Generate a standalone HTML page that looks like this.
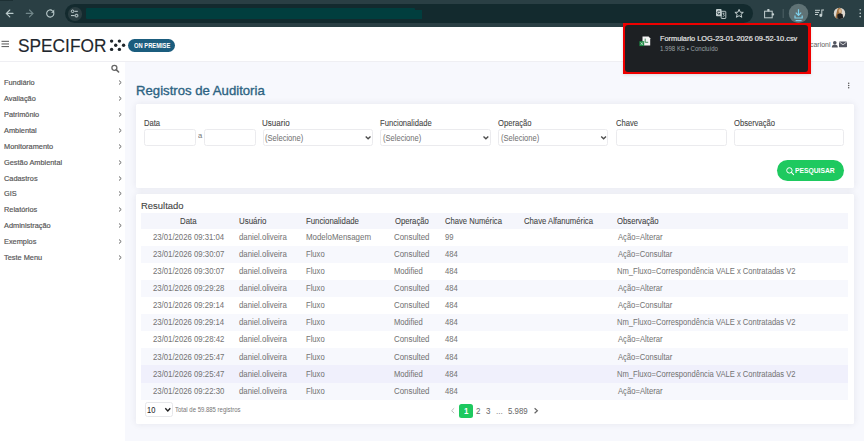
<!DOCTYPE html><html><head><meta charset="utf-8"><style>
*{box-sizing:border-box;margin:0;padding:0}
html,body{width:864px;height:441px;overflow:hidden;background:#f7f8fd;font-family:"Liberation Sans",sans-serif}
body{position:relative}
.a{position:absolute}
.t{position:absolute;white-space:nowrap;line-height:1}
svg{position:absolute;overflow:visible}
.mi{position:absolute;left:4px;font-size:7.6px;letter-spacing:-0.3px;color:#555;white-space:nowrap;line-height:1;-webkit-text-stroke:0.12px #555}
.card{position:absolute;background:#fff;border-radius:1.5px;box-shadow:0 0 7px rgba(30,30,70,.085)}
.lbl{position:absolute;font-size:8px;letter-spacing:-0.22px;color:#444;line-height:1;white-space:nowrap;-webkit-text-stroke:0.12px #444}
.inp{position:absolute;top:128.8px;height:17px;border:1px solid #ebebee;border-radius:2.5px;background:#fff}
.sel{font-size:8px;letter-spacing:-0.34px;color:#6a6a6a;-webkit-text-stroke:0.1px #6a6a6a}
.c{position:absolute;font-size:7.8px;letter-spacing:-0.15px;color:#5e5e5e;white-space:nowrap;line-height:1;-webkit-text-stroke:0.04px #5e5e5e}
.h{color:#3c3c3c;-webkit-text-stroke:0.04px #3c3c3c;letter-spacing:-0.2px}
</style></head><body>
<div class="a" style="left:0;top:0;width:864px;height:27px;background:#2a3f44"></div>
<div class="a" style="left:0;top:0;width:13px;height:1px;background:#1d3034"></div>
<div class="a" style="left:65px;top:4px;width:688px;height:19px;border-radius:10px;background:#132a2e"></div>
<div class="a" style="left:86.3px;top:8.3px;width:328.5px;height:11.2px;background:#013e3e;border-radius:1px"></div><div class="a" style="left:414px;top:10.2px;width:8px;height:9.3px;background:#013e3e"></div>
<div class="a" style="left:68px;top:7px;width:13.5px;height:13.5px;border-radius:50%;background:#2a3d41"></div>
<svg style="left:0;top:0" width="864" height="27">
<g fill="none" stroke="#b9cacb" stroke-width="1.1" stroke-linecap="round">
<path d="M13 13.4H6.5M9.8 10 6.3 13.4 9.8 16.8"/>
</g>
<g fill="none" stroke="#71878a" stroke-width="1.1" stroke-linecap="round">
<path d="M26.3 13.4H32.8M29.5 10 33 13.4 29.5 16.8"/>
</g>
<g fill="none" stroke="#b9cacb" stroke-width="1.1">
<path d="M53.6 12.2A3.6 3.6 0 1 1 52.6 10.8"/>
</g>
<path d="M54.2 9.6V12.7H51.1Z" fill="#b9cacb"/>
<g fill="none" stroke="#c6d3d4" stroke-width="1">
<circle cx="72.6" cy="11.3" r="1.3"/>
<path d="M74.5 11.3H77.8M71 15.6H74.6"/>
<rect x="75.2" y="14.3" width="2.6" height="2.6" rx=".6"/>
</g>
<!-- translate -->
<rect x="716" y="9" width="5.6" height="7.2" rx=".9" fill="#c3cfd0"/>
<path d="M720.1 11.6A1.6 1.6 0 1 0 720.1 13.6H718.9" fill="none" stroke="#132a2e" stroke-width=".8"/>
<rect x="721.2" y="11.3" width="4.6" height="7.2" rx=".6" fill="none" stroke="#c3cfd0" stroke-width=".9"/>
<path d="M722.4 13.2H724.6M723.5 13.2V15.2M722.6 16.8C723.8 16.6 724.4 15.8 724.5 14.8" fill="none" stroke="#c3cfd0" stroke-width=".7"/>
<!-- star -->
<path d="M739.1 9.4 740.3 12.2 743.3 12.4 741 14.3 741.8 17.3 739.1 15.7 736.4 17.3 737.2 14.3 734.9 12.4 737.9 12.2Z" fill="none" stroke="#c3cfd0" stroke-width="1" stroke-linejoin="round"/>
<!-- puzzle -->
<rect x="764.6" y="11.2" width="7.6" height="6.6" fill="none" stroke="#c3cfd0" stroke-width="1"/>
<rect x="767.2" y="9" width="2.4" height="2.4" rx=".8" fill="#c3cfd0"/>
<rect x="771.8" y="13.2" width="2.3" height="2.4" rx=".8" fill="#c3cfd0"/>
<path d="M783.2 9V18" stroke="#4d6165" stroke-width="1"/>
<circle cx="798.5" cy="13.4" r="9.7" fill="#5f7275"/>
<g fill="none" stroke="#7fd3ee" stroke-width="1.2">
<path d="M798.5 9.2V15.2M795.8 12.6 798.5 15.3 801.2 12.6"/>
<path d="M795 15.6V18H802.2V15.6"/>
<path d="M795.6 20.6H801.6"/>
</g>
<g fill="#c3cfd0">
<rect x="815" y="9.8" width="5" height="1"/>
<rect x="815" y="11.9" width="4" height="1"/>
<rect x="815" y="14" width="3" height="1"/>
<path d="M821.3 9.5H824V10.6H822.3V15.3A1.5 1.5 0 1 1 821.3 14Z"/>
</g>
<defs><clipPath id="av"><circle cx="839.5" cy="13.4" r="5.7"/></clipPath></defs>
<circle cx="839.5" cy="13.4" r="5.7" fill="#dcd7cf"/>
<g clip-path="url(#av)">
<path d="M838.2 8.2C840.6 7.6 841.8 9 841.6 11.6L841.2 14.2 838.6 15 836.4 19.5 834.6 18.6C836.6 16 836.4 10 838.2 8.2Z" fill="#a0703f"/>
<ellipse cx="840" cy="11" rx="1.4" ry="1.9" fill="#d9b58f"/>
<path d="M837.4 14.6C838.6 13.4 841 13.2 842.6 14.2L843.4 19.6H837.2Z" fill="#1e1e1e"/>
</g>
<g fill="#c3cfd0"><circle cx="860.2" cy="9.8" r=".8"/><circle cx="860.2" cy="13.3" r=".8"/><circle cx="860.2" cy="16.6" r=".8"/></g>
</svg>
<div class="a" style="left:0;top:27px;width:864px;height:35px;background:#fff;border-bottom:1px solid #efeff3"></div>
<svg style="left:0;top:27px" width="20" height="30"><g fill="#666"><rect x="1.5" y="13.8" width="7.5" height="1.1"/><rect x="1.5" y="16.4" width="7.5" height="1.1"/><rect x="1.5" y="19" width="7.5" height="1.1"/></g></svg>
<div class="t" style="left:17.87px;top:38px;font-size:17.7px;color:#1f272d;-webkit-text-stroke:0.15px #1f272d;transform:scaleX(0.9775);transform-origin:0 0">SPECIFOR</div>
<svg style="left:0;top:0" width="130" height="60"><g fill="#1f262b"><circle cx="111.6" cy="41.1" r="1.7"/><circle cx="119.4" cy="41.1" r="1.7"/><circle cx="115.7" cy="45.3" r="1.7"/><circle cx="123.6" cy="45.3" r="1.7"/><circle cx="111.6" cy="49.4" r="1.7"/><circle cx="119.4" cy="49.4" r="1.7"/></g></svg>
<div class="a" style="left:128px;top:38.8px;width:47px;height:13.5px;border-radius:7px;background:#1b5d7e"></div>
<div class="t" style="left:133.58px;top:43px;font-size:6.5px;color:#fff;font-weight:700;transform:scaleX(0.8889);transform-origin:0 0">ON PREMISE</div>
<div class="t" style="left:809.98px;top:41px;font-size:7.8px;color:#666;-webkit-text-stroke:0.05px #666;transform:scaleX(0.8899);transform-origin:0 0">carioni</div>
<svg style="left:0;top:0" width="864" height="60"><g fill="#525560"><circle cx="834.8" cy="42.8" r="1.8"/><path d="M831.8 47.6C831.8 45.4 833 44.6 834.8 44.6S837.8 45.4 837.8 47.6Z"/><rect x="839" y="41.6" width="8" height="5.6" rx=".6"/></g><path d="M839.3 42 843 44.8 846.7 42" fill="none" stroke="#fff" stroke-width=".7"/></svg>
<div class="a" style="left:0;top:62px;width:125px;height:379px;background:#fff"></div>
<svg style="left:0;top:0" width="130" height="80"><circle cx="114.4" cy="67.8" r="2.5" fill="none" stroke="#666" stroke-width="1.3"/><path d="M116.2 69.6 118.6 72" stroke="#666" stroke-width="1.6" stroke-linecap="round"/></svg>
<div class="t" style="left:3.72px;top:79px;font-size:7.6px;color:#555;-webkit-text-stroke:0.18px #555;transform:scaleX(0.9700);transform-origin:0 0">Fundiário</div>
<div class="t" style="left:4.20px;top:95px;font-size:7.6px;color:#555;-webkit-text-stroke:0.18px #555;transform:scaleX(0.9700);transform-origin:0 0">Avaliação</div>
<div class="t" style="left:3.72px;top:111px;font-size:7.6px;color:#555;-webkit-text-stroke:0.18px #555;transform:scaleX(0.9700);transform-origin:0 0">Patrimônio</div>
<div class="t" style="left:4.20px;top:127px;font-size:7.6px;color:#555;-webkit-text-stroke:0.18px #555;transform:scaleX(0.9700);transform-origin:0 0">Ambiental</div>
<div class="t" style="left:3.72px;top:143px;font-size:7.6px;color:#555;-webkit-text-stroke:0.18px #555;transform:scaleX(0.9700);transform-origin:0 0">Monitoramento</div>
<div class="t" style="left:3.96px;top:159px;font-size:7.6px;color:#555;-webkit-text-stroke:0.18px #555;transform:scaleX(0.9700);transform-origin:0 0">Gestão Ambiental</div>
<div class="t" style="left:3.96px;top:175px;font-size:7.6px;color:#555;-webkit-text-stroke:0.18px #555;transform:scaleX(0.9700);transform-origin:0 0">Cadastros</div>
<div class="t" style="left:3.96px;top:190px;font-size:7.6px;color:#555;-webkit-text-stroke:0.18px #555;transform:scaleX(0.9700);transform-origin:0 0">GIS</div>
<div class="t" style="left:3.72px;top:206px;font-size:7.6px;color:#555;-webkit-text-stroke:0.18px #555;transform:scaleX(0.9700);transform-origin:0 0">Relatórios</div>
<div class="t" style="left:4.20px;top:222px;font-size:7.6px;color:#555;-webkit-text-stroke:0.18px #555;transform:scaleX(0.9700);transform-origin:0 0">Administração</div>
<div class="t" style="left:3.72px;top:238px;font-size:7.6px;color:#555;-webkit-text-stroke:0.18px #555;transform:scaleX(0.9700);transform-origin:0 0">Exemplos</div>
<div class="t" style="left:4.20px;top:254px;font-size:7.6px;color:#555;-webkit-text-stroke:0.18px #555;transform:scaleX(0.9700);transform-origin:0 0">Teste Menu</div>
<svg style="left:0;top:0" width="130" height="441"><g fill="none" stroke="#666" stroke-width="1"><path d="M119 80.50 121.2 82.50 119 84.50"/><path d="M119 96.50 121.2 98.50 119 100.50"/><path d="M119 112.50 121.2 114.50 119 116.50"/><path d="M119 128.50 121.2 130.50 119 132.50"/><path d="M119 144.50 121.2 146.50 119 148.50"/><path d="M119 160.50 121.2 162.50 119 164.50"/><path d="M119 176.50 121.2 178.50 119 180.50"/><path d="M119 191.50 121.2 193.50 119 195.50"/><path d="M119 207.50 121.2 209.50 119 211.50"/><path d="M119 223.50 121.2 225.50 119 227.50"/><path d="M119 239.50 121.2 241.50 119 243.50"/><path d="M119 255.50 121.2 257.50 119 259.50"/></g></svg>
<div class="t" style="left:136.23px;top:84px;font-size:13.6px;color:#2c6382;-webkit-text-stroke:0.35px #2c6382;transform:scaleX(0.9679);transform-origin:0 0">Registros de Auditoria</div>
<svg style="left:0;top:0" width="864" height="100"><g fill="#555"><circle cx="848.7" cy="83.3" r=".75"/><circle cx="848.7" cy="85.5" r=".75"/><circle cx="848.7" cy="87.7" r=".75"/></g></svg>
<div class="card" style="left:135.5px;top:103.5px;width:718.5px;height:84px"></div>
<div class="t" style="left:144.24px;top:119px;font-size:8.4px;color:#444;-webkit-text-stroke:0.08px #444;transform:scaleX(0.9101);transform-origin:0 0">Data</div>
<div class="t" style="left:262.02px;top:119px;font-size:8.4px;color:#444;-webkit-text-stroke:0.08px #444;transform:scaleX(0.9571);transform-origin:0 0">Usuario</div>
<div class="t" style="left:379.85px;top:119px;font-size:8.4px;color:#444;-webkit-text-stroke:0.08px #444;transform:scaleX(0.9100);transform-origin:0 0">Funcionalidade</div>
<div class="t" style="left:497.77px;top:119px;font-size:8.4px;color:#444;-webkit-text-stroke:0.08px #444;transform:scaleX(0.9100);transform-origin:0 0">Operação</div>
<div class="t" style="left:615.77px;top:119px;font-size:8.4px;color:#444;-webkit-text-stroke:0.08px #444;transform:scaleX(0.9100);transform-origin:0 0">Chave</div>
<div class="t" style="left:733.57px;top:119px;font-size:8.4px;color:#444;-webkit-text-stroke:0.08px #444;transform:scaleX(0.9100);transform-origin:0 0">Observação</div>
<div class="inp" style="left:144.3px;width:52px"></div>
<div class="t" style="left:197.76px;top:132px;font-size:8px;color:#777;transform:scaleX(0.9500);transform-origin:0 0">a</div>
<div class="inp" style="left:204px;width:51.6px"></div>
<div class="inp" style="left:262.5px;width:110.3px"></div>
<div class="t" style="left:265.14px;top:135px;font-size:8.2px;color:#747474;-webkit-text-stroke:0.04px #747474;transform:scaleX(0.9235);transform-origin:0 0">(Selecione)</div>
<div class="inp" style="left:380.3px;width:110.3px"></div>
<div class="t" style="left:382.94px;top:135px;font-size:8.2px;color:#747474;-webkit-text-stroke:0.04px #747474;transform:scaleX(0.9235);transform-origin:0 0">(Selecione)</div>
<div class="inp" style="left:498.0px;width:110.3px"></div>
<div class="t" style="left:500.64px;top:135px;font-size:8.2px;color:#747474;-webkit-text-stroke:0.04px #747474;transform:scaleX(0.9235);transform-origin:0 0">(Selecione)</div>
<svg style="left:0;top:0" width="864" height="200"><g fill="none" stroke="#4c4c4c" stroke-width="1.35"><path d="M365.70 136.5 368.10 138.8 370.50 136.5"/><path d="M483.50 136.5 485.90 138.8 488.30 136.5"/><path d="M601.20 136.5 603.60 138.8 606.00 136.5"/></g></svg>
<div class="inp" style="left:615.9px;width:110.9px"></div>
<div class="inp" style="left:733.5px;width:110.9px"></div>
<div class="a" style="left:776.7px;top:159.6px;width:67.8px;height:21px;border-radius:10.5px;background:#1ec95f"></div>
<svg style="left:0;top:0" width="864" height="200"><circle cx="789.4" cy="170.4" r="2.7" fill="none" stroke="#fff" stroke-width="1"/><path d="M791.4 172.4 793.6 174.6" stroke="#fff" stroke-width="1.1" stroke-linecap="round"/></svg>
<div class="t" style="left:795.42px;top:167px;font-size:7px;color:#fff;font-weight:700;transform:scaleX(0.9630);transform-origin:0 0">PESQUISAR</div>
<div class="card" style="left:135.5px;top:193.8px;width:718.5px;height:230.5px"></div>
<div class="t" style="left:140.76px;top:201px;font-size:9.6px;color:#444;-webkit-text-stroke:0.1px #444;transform:scaleX(0.9846);transform-origin:0 0">Resultado</div>
<div class="a" style="left:141px;top:213.2px;width:707px;height:15.6px;background:#f5f6fc"></div>
<div class="t" style="left:180.43px;top:217px;font-size:8.4px;color:#444;-webkit-text-stroke:0.08px #444;transform:scaleX(0.9333);transform-origin:0 0">Data</div>
<div class="t" style="left:239.23px;top:217px;font-size:8.4px;color:#444;-webkit-text-stroke:0.08px #444;transform:scaleX(0.9464);transform-origin:0 0">Usuário</div>
<div class="t" style="left:306.43px;top:217px;font-size:8.4px;color:#444;-webkit-text-stroke:0.08px #444;transform:scaleX(0.9321);transform-origin:0 0">Funcionalidade</div>
<div class="t" style="left:394.57px;top:217px;font-size:8.4px;color:#444;-webkit-text-stroke:0.08px #444;transform:scaleX(0.9186);transform-origin:0 0">Operação</div>
<div class="t" style="left:444.87px;top:217px;font-size:8.4px;color:#444;-webkit-text-stroke:0.08px #444;transform:scaleX(0.9124);transform-origin:0 0">Chave Numérica</div>
<div class="t" style="left:523.77px;top:217px;font-size:8.4px;color:#444;-webkit-text-stroke:0.08px #444;transform:scaleX(0.9204);transform-origin:0 0">Chave Alfanumérica</div>
<div class="t" style="left:617.47px;top:217px;font-size:8.4px;color:#444;-webkit-text-stroke:0.08px #444;transform:scaleX(0.9229);transform-origin:0 0">Observação</div>
<div class="t" style="left:153.34px;top:233px;font-size:8.4px;color:#747474;-webkit-text-stroke:0.03px #747474;transform:scaleX(0.9246);transform-origin:0 0">23/01/2026 09:31:04</div>
<div class="t" style="left:239.47px;top:233px;font-size:8.4px;color:#747474;-webkit-text-stroke:0.03px #747474;transform:scaleX(0.9333);transform-origin:0 0">daniel.oliveira</div>
<div class="t" style="left:306.19px;top:233px;font-size:8.4px;color:#747474;-webkit-text-stroke:0.03px #747474;transform:scaleX(0.9432);transform-origin:0 0">ModeloMensagem</div>
<div class="t" style="left:394.33px;top:233px;font-size:8.4px;color:#747474;-webkit-text-stroke:0.03px #747474;transform:scaleX(0.9415);transform-origin:0 0">Consulted</div>
<div class="t" style="left:444.87px;top:233px;font-size:8.4px;color:#747474;-webkit-text-stroke:0.03px #747474;transform:scaleX(0.9100);transform-origin:0 0">99</div>
<div class="t" style="left:617.70px;top:233px;font-size:8.4px;color:#747474;-webkit-text-stroke:0.03px #747474;transform:scaleX(0.9155);transform-origin:0 0">Ação=Alterar</div>
<div class="a" style="left:141px;top:245.88px;width:707px;height:17.08px;background:#f7f8fd"></div>
<div class="t" style="left:153.34px;top:250px;font-size:8.4px;color:#747474;-webkit-text-stroke:0.03px #747474;transform:scaleX(0.9276);transform-origin:0 0">23/01/2026 09:30:07</div>
<div class="t" style="left:239.47px;top:250px;font-size:8.4px;color:#747474;-webkit-text-stroke:0.03px #747474;transform:scaleX(0.9333);transform-origin:0 0">daniel.oliveira</div>
<div class="t" style="left:306.22px;top:250px;font-size:8.4px;color:#747474;-webkit-text-stroke:0.03px #747474;transform:scaleX(0.9100);transform-origin:0 0">Fluxo</div>
<div class="t" style="left:394.33px;top:250px;font-size:8.4px;color:#747474;-webkit-text-stroke:0.03px #747474;transform:scaleX(0.9415);transform-origin:0 0">Consulted</div>
<div class="t" style="left:444.87px;top:250px;font-size:8.4px;color:#747474;-webkit-text-stroke:0.03px #747474;transform:scaleX(0.9100);transform-origin:0 0">484</div>
<div class="t" style="left:617.70px;top:250px;font-size:8.4px;color:#747474;-webkit-text-stroke:0.03px #747474;transform:scaleX(0.9071);transform-origin:0 0">Ação=Consultar</div>
<div class="t" style="left:153.34px;top:267px;font-size:8.4px;color:#747474;-webkit-text-stroke:0.03px #747474;transform:scaleX(0.9276);transform-origin:0 0">23/01/2026 09:30:07</div>
<div class="t" style="left:239.47px;top:267px;font-size:8.4px;color:#747474;-webkit-text-stroke:0.03px #747474;transform:scaleX(0.9333);transform-origin:0 0">daniel.oliveira</div>
<div class="t" style="left:306.22px;top:267px;font-size:8.4px;color:#747474;-webkit-text-stroke:0.03px #747474;transform:scaleX(0.9100);transform-origin:0 0">Fluxo</div>
<div class="t" style="left:394.12px;top:267px;font-size:8.4px;color:#747474;-webkit-text-stroke:0.03px #747474;transform:scaleX(0.9100);transform-origin:0 0">Modified</div>
<div class="t" style="left:444.87px;top:267px;font-size:8.4px;color:#747474;-webkit-text-stroke:0.03px #747474;transform:scaleX(0.9100);transform-origin:0 0">484</div>
<div class="t" style="left:617.02px;top:267px;font-size:8.4px;color:#747474;-webkit-text-stroke:0.03px #747474;transform:scaleX(0.9063);transform-origin:0 0">Nm_Fluxo=Correspondência VALE x Contratadas V2</div>
<div class="a" style="left:141px;top:280.04px;width:707px;height:17.08px;background:#f7f8fd"></div>
<div class="t" style="left:153.34px;top:284px;font-size:8.4px;color:#747474;-webkit-text-stroke:0.03px #747474;transform:scaleX(0.9276);transform-origin:0 0">23/01/2026 09:29:28</div>
<div class="t" style="left:239.47px;top:284px;font-size:8.4px;color:#747474;-webkit-text-stroke:0.03px #747474;transform:scaleX(0.9333);transform-origin:0 0">daniel.oliveira</div>
<div class="t" style="left:306.22px;top:284px;font-size:8.4px;color:#747474;-webkit-text-stroke:0.03px #747474;transform:scaleX(0.9100);transform-origin:0 0">Fluxo</div>
<div class="t" style="left:394.33px;top:284px;font-size:8.4px;color:#747474;-webkit-text-stroke:0.03px #747474;transform:scaleX(0.9415);transform-origin:0 0">Consulted</div>
<div class="t" style="left:444.87px;top:284px;font-size:8.4px;color:#747474;-webkit-text-stroke:0.03px #747474;transform:scaleX(0.9100);transform-origin:0 0">484</div>
<div class="t" style="left:617.70px;top:284px;font-size:8.4px;color:#747474;-webkit-text-stroke:0.03px #747474;transform:scaleX(0.9155);transform-origin:0 0">Ação=Alterar</div>
<div class="t" style="left:153.34px;top:301px;font-size:8.4px;color:#747474;-webkit-text-stroke:0.03px #747474;transform:scaleX(0.9246);transform-origin:0 0">23/01/2026 09:29:14</div>
<div class="t" style="left:239.47px;top:301px;font-size:8.4px;color:#747474;-webkit-text-stroke:0.03px #747474;transform:scaleX(0.9333);transform-origin:0 0">daniel.oliveira</div>
<div class="t" style="left:306.22px;top:301px;font-size:8.4px;color:#747474;-webkit-text-stroke:0.03px #747474;transform:scaleX(0.9100);transform-origin:0 0">Fluxo</div>
<div class="t" style="left:394.33px;top:301px;font-size:8.4px;color:#747474;-webkit-text-stroke:0.03px #747474;transform:scaleX(0.9415);transform-origin:0 0">Consulted</div>
<div class="t" style="left:444.87px;top:301px;font-size:8.4px;color:#747474;-webkit-text-stroke:0.03px #747474;transform:scaleX(0.9100);transform-origin:0 0">484</div>
<div class="t" style="left:617.70px;top:301px;font-size:8.4px;color:#747474;-webkit-text-stroke:0.03px #747474;transform:scaleX(0.9071);transform-origin:0 0">Ação=Consultar</div>
<div class="a" style="left:141px;top:314.20px;width:707px;height:17.08px;background:#f7f8fd"></div>
<div class="t" style="left:153.34px;top:318px;font-size:8.4px;color:#747474;-webkit-text-stroke:0.03px #747474;transform:scaleX(0.9246);transform-origin:0 0">23/01/2026 09:29:14</div>
<div class="t" style="left:239.47px;top:318px;font-size:8.4px;color:#747474;-webkit-text-stroke:0.03px #747474;transform:scaleX(0.9333);transform-origin:0 0">daniel.oliveira</div>
<div class="t" style="left:306.22px;top:318px;font-size:8.4px;color:#747474;-webkit-text-stroke:0.03px #747474;transform:scaleX(0.9100);transform-origin:0 0">Fluxo</div>
<div class="t" style="left:394.12px;top:318px;font-size:8.4px;color:#747474;-webkit-text-stroke:0.03px #747474;transform:scaleX(0.9100);transform-origin:0 0">Modified</div>
<div class="t" style="left:444.87px;top:318px;font-size:8.4px;color:#747474;-webkit-text-stroke:0.03px #747474;transform:scaleX(0.9100);transform-origin:0 0">484</div>
<div class="t" style="left:617.02px;top:318px;font-size:8.4px;color:#747474;-webkit-text-stroke:0.03px #747474;transform:scaleX(0.9063);transform-origin:0 0">Nm_Fluxo=Correspondência VALE x Contratadas V2</div>
<div class="t" style="left:153.34px;top:335px;font-size:8.4px;color:#747474;-webkit-text-stroke:0.03px #747474;transform:scaleX(0.9276);transform-origin:0 0">23/01/2026 09:28:42</div>
<div class="t" style="left:239.47px;top:335px;font-size:8.4px;color:#747474;-webkit-text-stroke:0.03px #747474;transform:scaleX(0.9333);transform-origin:0 0">daniel.oliveira</div>
<div class="t" style="left:306.22px;top:335px;font-size:8.4px;color:#747474;-webkit-text-stroke:0.03px #747474;transform:scaleX(0.9100);transform-origin:0 0">Fluxo</div>
<div class="t" style="left:394.33px;top:335px;font-size:8.4px;color:#747474;-webkit-text-stroke:0.03px #747474;transform:scaleX(0.9415);transform-origin:0 0">Consulted</div>
<div class="t" style="left:444.87px;top:335px;font-size:8.4px;color:#747474;-webkit-text-stroke:0.03px #747474;transform:scaleX(0.9100);transform-origin:0 0">484</div>
<div class="t" style="left:617.70px;top:335px;font-size:8.4px;color:#747474;-webkit-text-stroke:0.03px #747474;transform:scaleX(0.9155);transform-origin:0 0">Ação=Alterar</div>
<div class="a" style="left:141px;top:348.36px;width:707px;height:17.08px;background:#f7f8fd"></div>
<div class="t" style="left:153.34px;top:353px;font-size:8.4px;color:#747474;-webkit-text-stroke:0.03px #747474;transform:scaleX(0.9276);transform-origin:0 0">23/01/2026 09:25:47</div>
<div class="t" style="left:239.47px;top:353px;font-size:8.4px;color:#747474;-webkit-text-stroke:0.03px #747474;transform:scaleX(0.9333);transform-origin:0 0">daniel.oliveira</div>
<div class="t" style="left:306.22px;top:353px;font-size:8.4px;color:#747474;-webkit-text-stroke:0.03px #747474;transform:scaleX(0.9100);transform-origin:0 0">Fluxo</div>
<div class="t" style="left:394.33px;top:353px;font-size:8.4px;color:#747474;-webkit-text-stroke:0.03px #747474;transform:scaleX(0.9415);transform-origin:0 0">Consulted</div>
<div class="t" style="left:444.87px;top:353px;font-size:8.4px;color:#747474;-webkit-text-stroke:0.03px #747474;transform:scaleX(0.9100);transform-origin:0 0">484</div>
<div class="t" style="left:617.70px;top:353px;font-size:8.4px;color:#747474;-webkit-text-stroke:0.03px #747474;transform:scaleX(0.9071);transform-origin:0 0">Ação=Consultar</div>
<div class="a" style="left:141px;top:365.44px;width:707px;height:17.08px;background:#f0f0fc"></div>
<div class="t" style="left:153.34px;top:370px;font-size:8.4px;color:#747474;-webkit-text-stroke:0.03px #747474;transform:scaleX(0.9276);transform-origin:0 0">23/01/2026 09:25:47</div>
<div class="t" style="left:239.47px;top:370px;font-size:8.4px;color:#747474;-webkit-text-stroke:0.03px #747474;transform:scaleX(0.9333);transform-origin:0 0">daniel.oliveira</div>
<div class="t" style="left:306.22px;top:370px;font-size:8.4px;color:#747474;-webkit-text-stroke:0.03px #747474;transform:scaleX(0.9100);transform-origin:0 0">Fluxo</div>
<div class="t" style="left:394.12px;top:370px;font-size:8.4px;color:#747474;-webkit-text-stroke:0.03px #747474;transform:scaleX(0.9100);transform-origin:0 0">Modified</div>
<div class="t" style="left:444.87px;top:370px;font-size:8.4px;color:#747474;-webkit-text-stroke:0.03px #747474;transform:scaleX(0.9100);transform-origin:0 0">484</div>
<div class="t" style="left:617.02px;top:370px;font-size:8.4px;color:#747474;-webkit-text-stroke:0.03px #747474;transform:scaleX(0.9063);transform-origin:0 0">Nm_Fluxo=Correspondência VALE x Contratadas V2</div>
<div class="a" style="left:141px;top:382.52px;width:707px;height:17.08px;background:#f7f8fd"></div>
<div class="t" style="left:153.34px;top:387px;font-size:8.4px;color:#747474;-webkit-text-stroke:0.03px #747474;transform:scaleX(0.9276);transform-origin:0 0">23/01/2026 09:22:30</div>
<div class="t" style="left:239.47px;top:387px;font-size:8.4px;color:#747474;-webkit-text-stroke:0.03px #747474;transform:scaleX(0.9333);transform-origin:0 0">daniel.oliveira</div>
<div class="t" style="left:306.22px;top:387px;font-size:8.4px;color:#747474;-webkit-text-stroke:0.03px #747474;transform:scaleX(0.9100);transform-origin:0 0">Fluxo</div>
<div class="t" style="left:394.33px;top:387px;font-size:8.4px;color:#747474;-webkit-text-stroke:0.03px #747474;transform:scaleX(0.9415);transform-origin:0 0">Consulted</div>
<div class="t" style="left:444.87px;top:387px;font-size:8.4px;color:#747474;-webkit-text-stroke:0.03px #747474;transform:scaleX(0.9100);transform-origin:0 0">484</div>
<div class="t" style="left:617.70px;top:387px;font-size:8.4px;color:#747474;-webkit-text-stroke:0.03px #747474;transform:scaleX(0.9155);transform-origin:0 0">Ação=Alterar</div>
<div class="a" style="left:144.5px;top:402.1px;width:28.1px;height:14.6px;border:1px solid #e6e7ea;border-radius:2.5px;background:#fff"></div>
<div class="t" style="left:147.35px;top:406px;font-size:8.4px;color:#222;-webkit-text-stroke:0.05px #222;transform:scaleX(0.8941);transform-origin:0 0">10</div>
<svg style="left:0;top:0" width="864" height="441"><path d="M165.3 408.3 167.8 410.9 170.3 408.3" fill="none" stroke="#222" stroke-width="1.4"/></svg>
<div class="t" style="left:175.07px;top:407px;font-size:6.4px;color:#777;transform:scaleX(0.9367);transform-origin:0 0">Total de 59.885 registros</div>
<svg style="left:0;top:0" width="864" height="441"><g fill="none" stroke-width="1"><path d="M454.2 408.2 451.6 410.7 454.2 413.2" stroke="#bbb"/><path d="M534.6 408.2 537.4 410.7 534.6 413.2" stroke="#666" stroke-width="1.2"/></g></svg>
<div class="a" style="left:459.2px;top:404px;width:14.1px;height:13.9px;border-radius:2.5px;background:#1ec95f"></div>
<div class="t" style="left:464.32px;top:407px;font-size:8.4px;color:#fff;font-weight:700;transform:scaleX(0.9500);transform-origin:0 0">1</div>
<div class="t" style="left:475.92px;top:407px;font-size:8.4px;color:#666;transform:scaleX(0.9500);transform-origin:0 0">2</div>
<div class="t" style="left:486.26px;top:407px;font-size:8.4px;color:#666;transform:scaleX(0.9500);transform-origin:0 0">3</div>
<div class="t" style="left:495.96px;top:407px;font-size:8.4px;color:#888;transform:scaleX(0.9818);transform-origin:0 0">...</div>
<div class="t" style="left:507.57px;top:407px;font-size:8.4px;color:#666;transform:scaleX(0.9383);transform-origin:0 0">5.989</div>
<div class="a" style="left:623px;top:22.5px;width:187.8px;height:51.5px;background:#ee0000;box-shadow:0 1px 3px rgba(0,0,0,.12)"></div>
<div class="a" style="left:625.3px;top:24.8px;width:182.9px;height:47px;background:#1d2023;border-radius:3px"></div>
<svg style="left:0;top:0" width="864" height="80"><path d="M642.5 36.6H648.6L650.2 38.2V45.6H642.5Z" fill="#f4f4f4"/><path d="M645.2 38.6V42.3H648.2" fill="none" stroke="#1f7a3e" stroke-width=".8"/><rect x="639.4" y="41.2" width="4.8" height="4.9" fill="#1e8a45"/><path d="M640.7 42.4 642.9 44.9M642.9 42.4 640.7 44.9" stroke="#fff" stroke-width=".6"/></svg>
<div class="t" style="left:659.50px;top:35px;font-size:7.4px;color:#e8e8e8;-webkit-text-stroke:0.18px #e8e8e8;transform:scaleX(0.9946);transform-origin:0 0">Formulario LOG-23-01-2026 09-52-10.csv</div>
<div class="t" style="left:659.54px;top:46px;font-size:6.6px;color:#9aa0a4;transform:scaleX(0.9226);transform-origin:0 0">1.998 KB • Concluído</div>
</body></html>
